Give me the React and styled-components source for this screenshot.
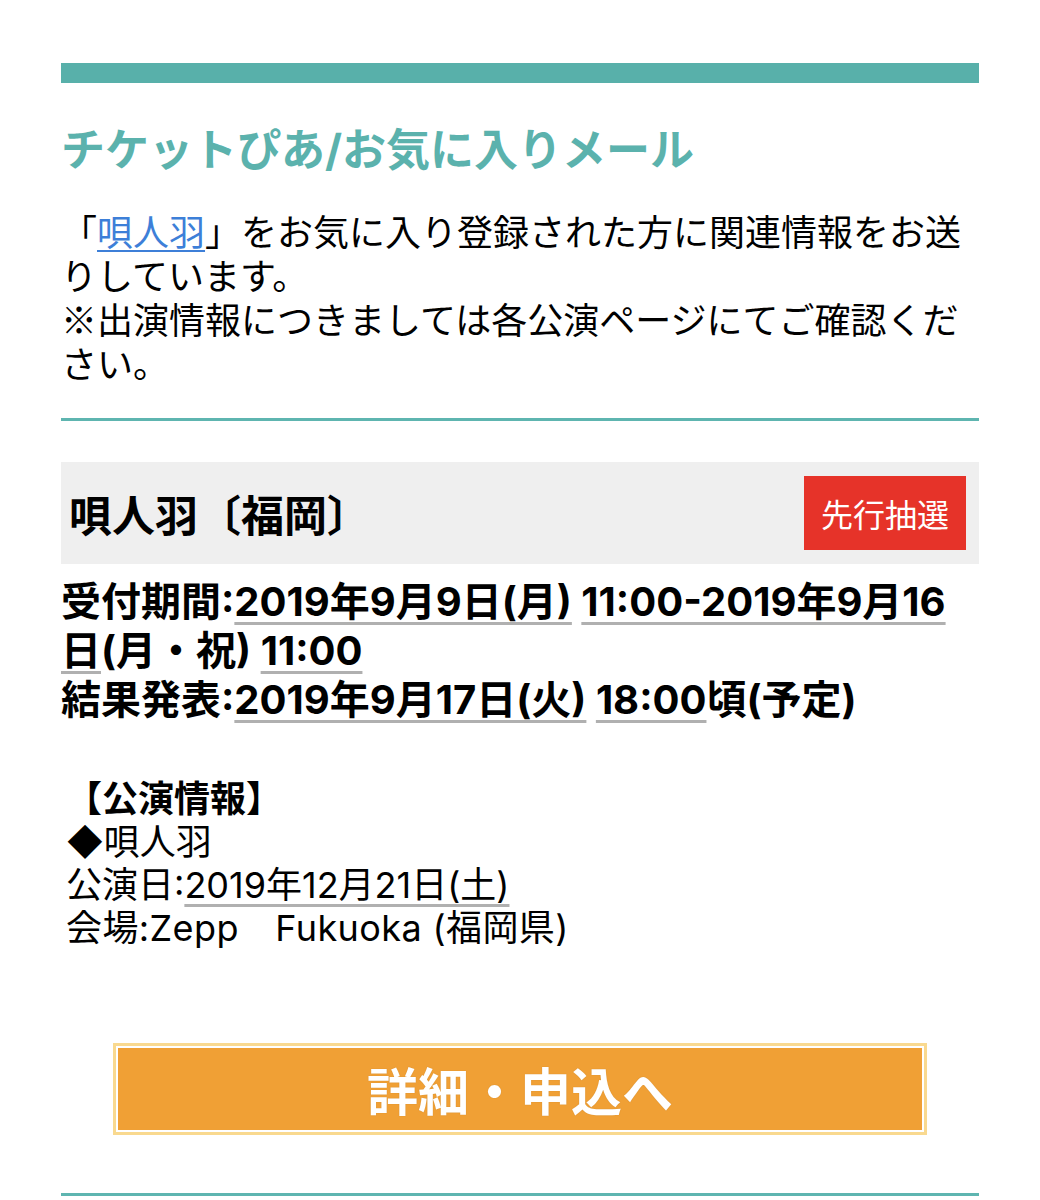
import styled, { createGlobalStyle } from 'styled-components';

const GlobalStyle = createGlobalStyle`
    html, body {
        margin: 0;
        padding: 0;
        background: #fff;
    }
    body {
        font-family: "Inter", "Noto Sans CJK JP", sans-serif;
        color: #000;
        text-spacing-trim: space-all;
    }
`;

const Page = styled.div`
    width: 918px;
    padding: 63px 61px 0;
    display: flex;
    flex-direction: column;
`;

const TopBar = styled.div`
    height: 20px;
    background: #58b0aa;
`;

const Title = styled.h1`
    margin: 40px 0 0;
    font-size: 44px;
    line-height: 54px;
    font-weight: 700;
    color: #5bb2ad;
`;

const Intro = styled.p`
    margin: 31px 0 0;
    font-family: "Noto Sans CJK JP", sans-serif;
    font-size: 36px;
    line-height: 44px;
    font-weight: 400;
`;

const Link = styled.a`
    color: #3d7fd8;
    text-decoration: underline;
    text-decoration-thickness: 2px;
    text-underline-offset: 4px;
`;

const Divider = styled.hr`
    margin: ${(p) => p.$top}px 0 0;
    border: none;
    height: 3px;
    background: #5eb5b0;
`;

const EventHead = styled.div`
    margin-top: 41px;
    height: 102px;
    box-sizing: border-box;
    padding: 14px 13px 14px 8px;
    background: #efefef;
    display: flex;
    align-items: center;
    justify-content: space-between;
`;

const EventName = styled.h2`
    margin: 0;
    font-family: "Noto Sans CJK JP", sans-serif;
    font-size: 43px;
    font-weight: 700;
`;

const Badge = styled.span`
    height: 74px;
    padding: 0 17px;
    display: flex;
    align-items: center;
    background: #e63329;
    color: #fff;
    font-size: 32px;
    font-weight: 400;
`;

const Schedule = styled.div`
    margin-top: 13px;
    font-size: 40px;
    line-height: 49px;
    font-weight: 700;
`;

const Detected = styled.span`
    text-decoration: underline;
    text-decoration-color: #b0b0b0;
    text-decoration-thickness: 3px;
    text-underline-offset: 6px;
`;

const Info = styled.div`
    margin-top: 54px;
    padding-left: 5px;
    font-size: 36px;
    line-height: 43px;
    font-weight: 400;
`;

const InfoHeading = styled.div`
    font-weight: 700;
`;

const Venue = styled.div`
    letter-spacing: 0.4px;
`;

const ApplyButton = styled.a`
    margin: 93px 52px 0;
    height: 92px;
    box-sizing: border-box;
    border: 3px solid #f9d98f;
    padding: 2px;
    background: #f0a035;
    background-clip: content-box;
    display: flex;
    align-items: center;
    justify-content: center;
    color: #fff;
    font-size: 51px;
    font-weight: 700;
    text-decoration: none;
    text-shadow: 0 0 1px rgba(120, 70, 0, 0.35);
`;

export default function App() {
    return (
        <>
            <GlobalStyle />
            <Page>
                <TopBar />
                <Title>チケットぴあ/お気に入りメール</Title>
                <Intro>
                    「<Link href="#">唄人羽</Link>」をお気に入り登録された方に関連情報をお送りしています。
                    <br />
                    ※出演情報につきましては各公演ページにてご確認ください。
                </Intro>
                <Divider $top={34} />
                <EventHead>
                    <EventName>唄人羽〔福岡〕</EventName>
                    <Badge>先行抽選</Badge>
                </EventHead>
                <Schedule>
                    <div>
                        受付期間:<Detected>2019年9月9日(月)</Detected> <Detected>11:00-2019年9月16日</Detected>(月・祝) <Detected>11:00</Detected>
                    </div>
                    <div>
                        結果発表:<Detected>2019年9月17日(火)</Detected> <Detected>18:00</Detected>頃(予定)
                    </div>
                </Schedule>
                <Info>
                    <InfoHeading>【公演情報】</InfoHeading>
                    <div>◆唄人羽</div>
                    <div>
                        公演日:<Detected>2019年12月21日(土)</Detected>
                    </div>
                    <Venue>会場:Zepp　Fukuoka (福岡県)</Venue>
                </Info>
                <ApplyButton href="#">詳細・申込へ</ApplyButton>
                <Divider $top={58} />
            </Page>
        </>
    );
}
